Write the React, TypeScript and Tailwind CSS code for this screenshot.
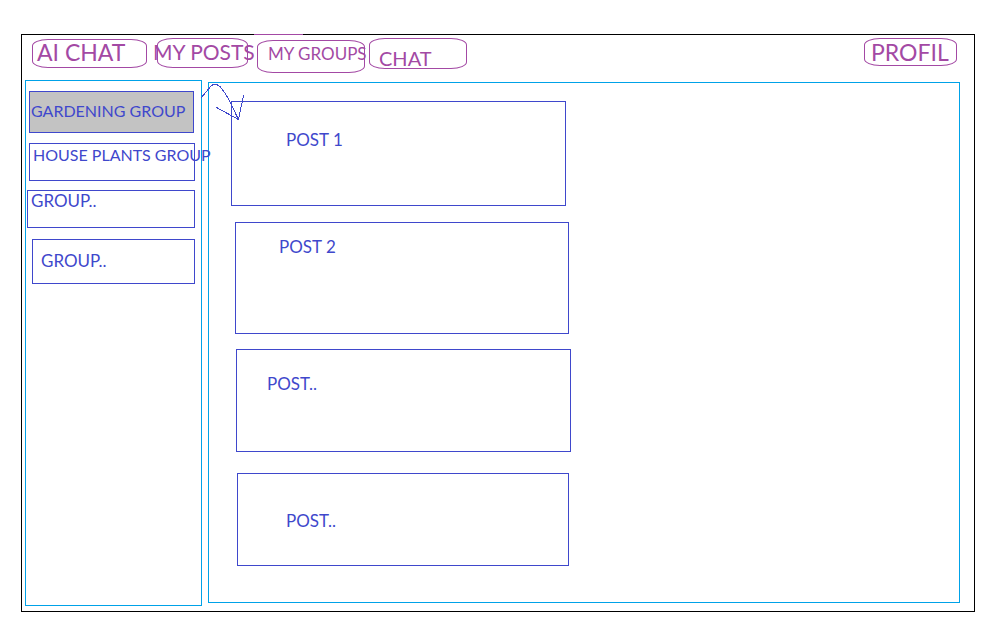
import clsx from "clsx";

type Item = { label: string; box: string };

const tabs: (Item & { text: string })[] = [
  { label: "AI CHAT", box: "mt-1 w-[115px] h-[29px] pl-1 pt-[2px]", text: "text-[23px]" },
  { label: "MY POSTS", box: "mt-[3px] ml-[10px] w-[91px] h-[30px] pt-[3px]", text: "-ml-[5px] text-[21px]" },
  { label: "MY GROUPS", box: "mt-[5px] ml-[9px] w-[108px] h-[33px] pl-[10px] pt-[3px]", text: "text-[17px]" },
  { label: "CHAT", box: "mt-[3px] ml-1 w-[98px] h-[31px] pl-[9px] pt-[9px]", text: "text-[20px]" },
];

const groups: Item[] = [
  { label: "GARDENING GROUP", box: "ml-[3px] mr-[7px] h-[42px] pl-px pt-[9px] bg-[#c3c3c3] text-[16px]" },
  { label: "HOUSE PLANTS GROUP", box: "ml-[3px] mr-[6px] mt-[10px] h-[38px] pl-[3px] pt-px text-[16px]" },
  { label: "GROUP..", box: "ml-px mr-[6px] mt-[9px] h-[38px] pl-[3px] text-[17px]" },
  { label: "GROUP..", box: "ml-[6px] mr-[6px] mt-[11px] h-[45px] pl-2 pt-[11px] text-[17px]" },
];

const posts: Item[] = [
  { label: "POST 1", box: "ml-[22px] max-w-[335px] h-[105px] pl-[54px] pt-[28px]" },
  { label: "POST 2", box: "ml-[26px] mt-4 max-w-[334px] h-[112px] pl-[43px] pt-[14px]" },
  { label: "POST..", box: "ml-[27px] mt-[15px] max-w-[335px] h-[103px] pl-[30px] pt-[24px]" },
  { label: "POST..", box: "ml-[28px] mt-[21px] max-w-[332px] h-[93px] pl-[48px] pt-[37px]" },
];

const tabStyle =
  "flex shrink-0 items-start justify-start whitespace-nowrap border border-[#a349a4] rounded-[16px/7px] leading-5";

function Arrow() {
  return (
    <svg
      className="pointer-events-none absolute left-[-10px] top-0 text-[#3f48cc]"
      width="48"
      height="40"
      viewBox="0 0 48 40"
      fill="none"
      stroke="currentColor"
      shapeRendering="crispEdges"
      aria-hidden="true"
    >
      <path d="M1.500 15.500L7 9L12 3Q16 -.5 21 3.500Q26 9 30 17L39.500 36.500" />
      <path d="M17.500 24.500L39.500 36.500L44.500 12.500" />
    </svg>
  );
}

export default function App() {
  return (
    <div className="min-h-screen bg-white pt-[34px] pr-7 pb-6 pl-[21px] font-[Lato,sans-serif]">
      <div className="relative border border-black pb-[5px]">
        <span className="absolute -top-px left-[232px] h-px w-[49px] bg-[#a349a4]" />
        <header className="flex h-[45px] items-start pl-[10px] pr-[17px] text-[#a349a4]">
          <nav className="flex items-start">
            {tabs.map((tab) => (
              <button key={tab.label} type="button" className={clsx(tabStyle, tab.box)}>
                <span className={clsx("leading-5", tab.text)}>{tab.label}</span>
              </button>
            ))}
          </nav>
          <button type="button" className={clsx(tabStyle, "mt-[3px] ml-auto h-7 w-[93px] pl-[6px] pt-[3px]")}>
            <span className="text-[23px] leading-5">PROFIL</span>
          </button>
        </header>

        <div className="flex items-stretch pl-[3px] pr-[14px] text-[17px] leading-5 text-[#3f48cc]">
          <aside className="flex w-[177px] shrink-0 flex-col border border-[#00a2e8] pt-[10px]">
            {groups.map((group, index) => (
              <button
                key={index}
                type="button"
                className={clsx(
                  "relative z-10 flex items-start justify-start whitespace-nowrap border border-[#3f48cc]",
                  group.box,
                )}
              >
                <span className="leading-5">{group.label}</span>
              </button>
            ))}
          </aside>

          <main className="relative mt-[2px] mb-[3px] ml-[6px] min-w-0 flex-1 border border-[#00a2e8] pt-[18px] pb-9">
            {posts.map((post, index) => (
              <article key={index} className={clsx("border border-[#3f48cc]", post.box)}>
                {post.label}
              </article>
            ))}
            <Arrow />
          </main>
        </div>
      </div>
    </div>
  );
}
